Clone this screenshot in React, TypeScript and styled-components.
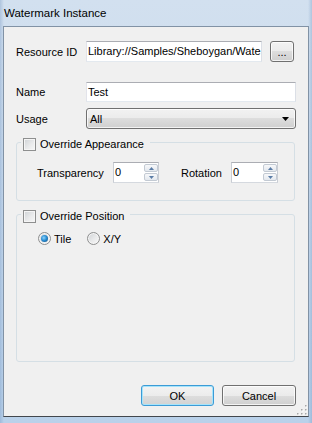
import React from "react";
import styled, { createGlobalStyle, css } from "styled-components";

const GlobalStyle = createGlobalStyle`
  html, body { margin: 0; padding: 0; }
  body {
    width: 312px;
    height: 423px;
    overflow: hidden;
    font-family: "Liberation Sans", Arial, sans-serif;
    font-size: 11px;
    color: #000;
    background: #c4d8ed;
  }
  *, *::before, *::after { box-sizing: border-box; }
`;

const Window = styled.div`
  width: 312px;
  height: 423px;
  display: flex;
  flex-direction: column;
  padding: 0 3px 6px;
  background:
    linear-gradient(90deg, rgba(110, 145, 190, 0.35) 0, rgba(110, 145, 190, 0) 4px, rgba(110, 145, 190, 0) 308px, rgba(110, 145, 190, 0.35) 312px),
    linear-gradient(180deg, #d2e0ef 0%, #c8daed 45%, #b9d1ea 100%);
`;

const TitleBar = styled.div`
  height: 26px;
  display: flex;
  align-items: center;
  padding: 0 0 1px 1px;
  font-size: 11.5px;
  color: #000;
`;

const Client = styled.div`
  flex: 1;
  position: relative;
  display: flex;
  flex-direction: column;
  padding: 14px 12px 10px;
  background: #f0f0f0;
  border: 1px solid #8192a5;
  border-bottom-color: #42474d;
`;

const FieldRow = styled.div<{ $top: number; $h: number }>`
  display: flex;
  align-items: center;
  height: ${(p) => p.$h}px;
  margin-top: ${(p) => p.$top}px;
`;

const FieldLabel = styled.span`
  width: 70px;
  flex: none;
`;

const TextBox = styled.div`
  flex: 1;
  min-width: 0;
  height: 100%;
  display: flex;
  align-items: center;
  padding: 0 1px 1px;
  background: #fff;
  border: 1px solid;
  border-color: #abadb3 #dbdfe6 #e3e9ef #e2e3ea;
  white-space: nowrap;
  overflow: hidden;
`;

const buttonFace = css`
  border: 1px solid #707070;
  border-radius: 3px;
  background: linear-gradient(180deg, #f2f2f2 0%, #ebebeb 50%, #dddddd 50%, #cfcfcf 100%);
  box-shadow: inset 0 0 0 1px rgba(255, 255, 255, 0.75);
`;

const PushButton = styled.button<{ $w: number; $default?: boolean; $ml?: number; $mr?: number }>`
  ${buttonFace};
  flex: none;
  width: ${(p) => p.$w}px;
  height: 100%;
  margin: 0 ${(p) => p.$mr ?? 0}px 0 ${(p) => p.$ml ?? 0}px;
  padding: 0;
  font: inherit;
  color: #000;
  ${(p) =>
    p.$default &&
    css`
      border-color: #3c9bd6;
      box-shadow: inset 0 0 0 1px #a6e4fb;
      background: linear-gradient(180deg, #f3f3f3 0%, #ececec 50%, #dedede 50%, #d2d2d2 100%);
    `}
`;

const Combo = styled.div`
  ${buttonFace};
  flex: 1;
  height: 100%;
  display: flex;
  align-items: center;
  justify-content: space-between;
  padding: 0 6px 0 3px;
`;

const Group = styled.fieldset<{ $grow?: boolean }>`
  margin: 4px 1px 0 0;
  padding: 0;
  min-width: 0;
  border: 1px solid #d5dfe5;
  border-radius: 3px;
  ${(p) => p.$grow && "flex: 1;"}
`;

const Legend = styled.legend`
  margin-left: 4px;
  padding: 4px 6px 0 2px;
  height: 18px;
  display: flex;
  align-items: center;
  gap: 4px;
`;

const CheckBox = styled.span`
  flex: none;
  width: 13px;
  height: 13px;
  border: 1px solid #8e8f8f;
  background: linear-gradient(135deg, #cfd2d5 0%, #e9eaeb 55%, #f7f7f7 100%);
  box-shadow: inset 0 0 0 1px #f5f5f5;
`;

const GroupBody = styled.div<{ $pad: string }>`
  display: flex;
  align-items: center;
  padding: ${(p) => p.$pad};
`;

const SpinLabel = styled.span<{ $w: number; $ml?: number }>`
  flex: none;
  width: ${(p) => p.$w}px;
  margin-left: ${(p) => p.$ml ?? 0}px;
`;

const Spin = styled.div<{ $w: number }>`
  flex: none;
  width: ${(p) => p.$w}px;
  height: 21px;
  display: flex;
  background: #fff;
  border: 1px solid;
  border-color: #abadb3 #c9cdd4 #d5d9df #c9cdd4;
`;

const SpinValue = styled.span`
  flex: 1;
  display: flex;
  align-items: center;
  padding: 0 0 1px 1px;
`;

const SpinButtons = styled.div`
  width: 14px;
  display: flex;
  flex-direction: column;
  gap: 1px;
  padding: 1px 0;
`;

const SpinButton = styled.div`
  flex: 1;
  display: flex;
  align-items: center;
  justify-content: center;
  border: 1px solid #c3cad3;
  border-radius: 2px;
  background: linear-gradient(180deg, #f7f8fa 0%, #e3e8ee 100%);
`;

const RadioRow = styled.div`
  display: flex;
  align-items: center;
  gap: 16px;
  padding: 9px 0 0 21px;
`;

const RadioOption = styled.label`
  display: flex;
  align-items: center;
  gap: 3px;
  height: 13px;
`;

const RadioDot = styled.span<{ $checked?: boolean }>`
  flex: none;
  width: 13px;
  height: 13px;
  border-radius: 50%;
  border: 1px solid #8e8f8f;
  background: linear-gradient(135deg, #cfd2d5 0%, #e9eaeb 55%, #f8f8f8 100%);
  box-shadow: inset 0 0 0 1px #f5f5f5;
  display: flex;
  align-items: center;
  justify-content: center;
  &::after {
    content: "";
    display: ${(p) => (p.$checked ? "block" : "none")};
    width: 7px;
    height: 7px;
    border-radius: 50%;
    background: radial-gradient(circle at 40% 40%, #8fd3fb 0%, #2b8fd4 45%, #0c4477 100%);
  }
`;

const Spacer = styled.div`
  flex: 1;
`;

const ButtonRow = styled.div`
  display: flex;
  justify-content: flex-end;
  gap: 8px;
  height: 21px;
  margin-top: 23px;
`;

const Grip = styled.svg`
  position: absolute;
  right: 1px;
  bottom: 1px;
`;

const Arrow = ({ up }: { up?: boolean }) => (
  <svg width="5" height="3" viewBox="0 0 5 3">
    <polygon points={up ? "2.5,0 5,3 0,3" : "0,0 5,0 2.5,3"} fill="#5a7ca6" />
  </svg>
);

const SpinBox = ({ w }: { w: number }) => (
  <Spin $w={w}>
    <SpinValue>0</SpinValue>
    <SpinButtons>
      <SpinButton>
        <Arrow up />
      </SpinButton>
      <SpinButton>
        <Arrow />
      </SpinButton>
    </SpinButtons>
  </Spin>
);

const gripDots = [
  [8, 0],
  [4, 4],
  [8, 4],
  [0, 8],
  [4, 8],
  [8, 8],
];

export default function App() {
  return (
    <>
      <GlobalStyle />
      <Window>
        <TitleBar>Watermark Instance</TitleBar>
        <Client>
          <FieldRow $top={0} $h={21}>
            <FieldLabel>Resource ID</FieldLabel>
            <TextBox>Library://Samples/Sheboygan/Wate</TextBox>
            <PushButton $w={24} $ml={8} $mr={2}>
              ...
            </PushButton>
          </FieldRow>
          <FieldRow $top={20} $h={20}>
            <FieldLabel>Name</FieldLabel>
            <TextBox>Test</TextBox>
          </FieldRow>
          <FieldRow $top={6} $h={21}>
            <FieldLabel>Usage</FieldLabel>
            <Combo>
              <span>All</span>
              <svg width="7" height="4" viewBox="0 0 7 4">
                <polygon points="0,0 7,0 3.5,4" fill="#000" />
              </svg>
            </Combo>
          </FieldRow>

          <Group>
            <Legend>
              <CheckBox />
              <span>Override Appearance</span>
            </Legend>
            <GroupBody $pad="11px 0 17px 20px">
              <SpinLabel $w={76}>Transparency</SpinLabel>
              <SpinBox w={46} />
              <SpinLabel $w={50} $ml={22}>
                Rotation
              </SpinLabel>
              <SpinBox w={47} />
            </GroupBody>
          </Group>

          <Group $grow>
            <Legend>
              <CheckBox />
              <span>Override Position</span>
            </Legend>
            <RadioRow>
              <RadioOption>
                <RadioDot $checked />
                <span>Tile</span>
              </RadioOption>
              <RadioOption>
                <RadioDot />
                <span>X/Y</span>
              </RadioOption>
            </RadioRow>
            <Spacer />
          </Group>

          <ButtonRow>
            <PushButton $w={73} $default>
              OK
            </PushButton>
            <PushButton $w={74}>Cancel</PushButton>
          </ButtonRow>

          <Grip width="10" height="10" viewBox="0 0 10 10">
            {gripDots.map(([x, y]) => (
              <g key={`${x}-${y}`}>
                <rect x={x + 1} y={y + 1} width="1.5" height="1.5" fill="#ffffff" />
                <rect x={x} y={y} width="1.5" height="1.5" fill="#a7a7a7" />
              </g>
            ))}
          </Grip>
        </Client>
      </Window>
    </>
  );
}
